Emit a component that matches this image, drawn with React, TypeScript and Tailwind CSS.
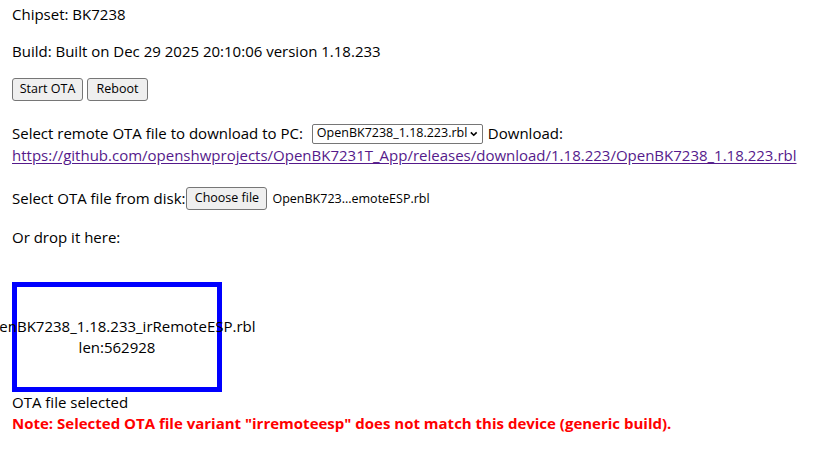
function Chevron() {
  return (
    <svg width="9" height="6" viewBox="0 0 9 6" className="ml-[3px]">
      <path d="M1 1 L4.5 4.5 L8 1" fill="none" stroke="black" strokeWidth="1.9" />
    </svg>
  )
}

export default function App() {
  const btn =
    "h-[23px] rounded-[3px] border border-[#767676] bg-[#efefef] text-[12.5px] leading-none text-black flex items-center justify-center"

  return (
    <div className="px-3 pt-1 font-['Open_Sans',sans-serif] text-[15px] leading-[21px] text-black bg-white min-h-[468px] overflow-hidden">
      <p>Chipset: BK7238</p>
      <p className="mt-4">Build: Built on Dec 29 2025 20:10:06 version 1.18.233</p>

      <div className="mt-4 flex gap-1">
        <button className={`${btn} w-[71px]`}>Start OTA</button>
        <button className={`${btn} w-[61px]`}>Reboot</button>
      </div>

      <div className="mt-[21px] flex items-center h-[23px] whitespace-nowrap">
        <span>Select remote OTA file to download to PC:</span>
        <div className="ml-[9px] h-[20px] w-[171px] rounded-[2px] border border-[#767676] bg-white flex items-center pl-[4px] pr-[4px] text-[12.5px] leading-none">
          <span className="flex-1">OpenBK7238_1.18.223.rbl</span>
          <Chevron />
        </div>
        <span className="ml-[5px]">Download:</span>
      </div>
      <a
        href="#"
        className="block whitespace-nowrap text-[#551a8b] underline underline-offset-[2px]"
      >
        https://github.com/openshwprojects/OpenBK7231T_App/releases/download/1.18.223/OpenBK7238_1.18.223.rbl
      </a>

      <div className="mt-5 flex items-center h-[24px] whitespace-nowrap">
        <span>Select OTA file from disk:</span>
        <button className={`${btn} ml-px h-[21px] w-[81px]`}>Choose file</button>
        <span className="ml-[5px] text-[12.5px]">OpenBK723...emoteESP.rbl</span>
      </div>

      <p className="mt-[17px]">Or drop it here:</p>

      <div className="mt-[34px] h-[110px] w-[210px] border-[5px] border-[#0000ff] flex flex-col items-center justify-center text-center">
        <span className="whitespace-nowrap">OpenBK7238_1.18.233_irRemoteESP.rbl</span>
        <span>len:562928</span>
      </div>

      <p>OTA file selected</p>
      <p className="font-bold text-[#ff0000]">
        Note: Selected OTA file variant "irremoteesp" does not match this device (generic build).
      </p>
    </div>
  )
}
